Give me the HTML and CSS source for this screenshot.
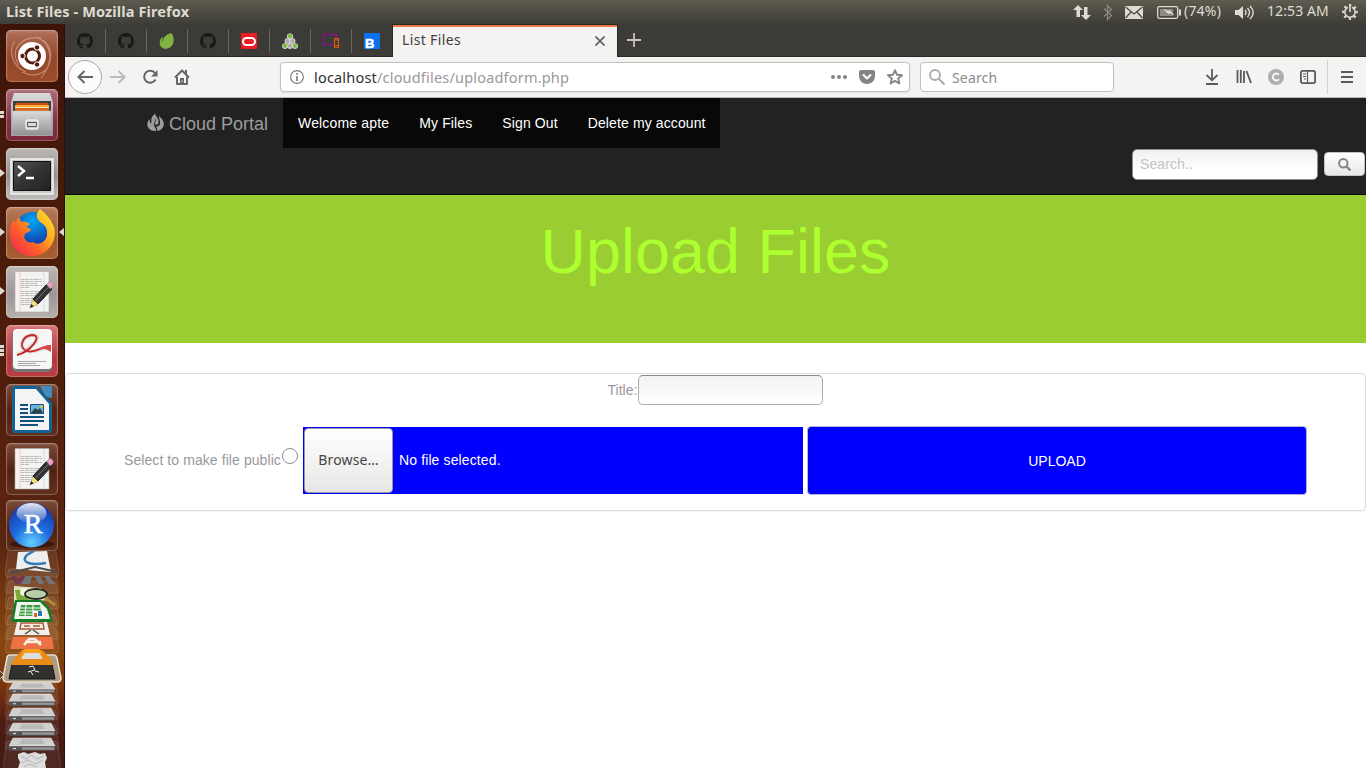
FILE: index.html
```html
<!DOCTYPE html>
<html lang="en">
<head>
<meta charset="utf-8">
<title>List Files</title>
<link rel="stylesheet" href="styles.css">
</head>
<body>
<svg class="defs" width="0" height="0">
  <defs>
    <linearGradient id="silver" x1="0" y1="0" x2="0" y2="1"><stop offset="0" stop-color="#dcdcdc"/><stop offset="1" stop-color="#8f8f8f"/></linearGradient>
    <linearGradient id="fox" x1="1" y1="0" x2="0" y2="1"><stop offset="0" stop-color="#ffe93a"/><stop offset=".35" stop-color="#ffb01c"/><stop offset=".65" stop-color="#ff5a2a"/><stop offset="1" stop-color="#ec2058"/></linearGradient>
    <radialGradient id="globe" cx=".5" cy=".25" r=".7"><stop offset="0" stop-color="#00a7f5"/><stop offset="1" stop-color="#1438a8"/></radialGradient>
    <radialGradient id="rball" cx=".5" cy=".9" r=".8"><stop offset="0" stop-color="#62d2ff"/><stop offset=".5" stop-color="#1f6fe0"/><stop offset="1" stop-color="#153fb0"/></radialGradient>
    <linearGradient id="gloss" x1="0" y1="0" x2="0" y2="1"><stop offset="0" stop-color="#fff" stop-opacity=".9"/><stop offset="1" stop-color="#fff" stop-opacity=".1"/></linearGradient>
    <linearGradient id="screen" x1="0" y1="0" x2="1" y2="1"><stop offset="0" stop-color="#555"/><stop offset=".5" stop-color="#333"/><stop offset="1" stop-color="#222"/></linearGradient>
    <symbol id="github" viewBox="0 0 16 16"><path fill="#191919" d="M8 0C3.58 0 0 3.58 0 8c0 3.54 2.29 6.53 5.47 7.59.4.07.55-.17.55-.38 0-.19-.01-.82-.01-1.49-2.01.37-2.53-.49-2.69-.94-.09-.23-.48-.94-.82-1.13-.28-.15-.68-.52-.01-.53.63-.01 1.08.58 1.23.82.72 1.21 1.87.87 2.33.66.07-.52.28-.87.51-1.07-1.78-.2-3.64-.89-3.64-3.95 0-.87.31-1.59.82-2.15-.08-.2-.36-1.02.08-2.12 0 0 .67-.21 2.2.82.64-.18 1.32-.27 2-.27s1.36.09 2 .27c1.53-1.04 2.2-.82 2.2-.82.44 1.1.16 1.92.08 2.12.51.56.82 1.27.82 2.15 0 3.07-1.87 3.75-3.65 3.95.29.25.54.73.54 1.48 0 1.07-.01 1.93-.01 2.2 0 .21.15.46.55.38A8 8 0 0 0 16 8c0-4.42-3.58-8-8-8z"/></symbol>
    <symbol id="editor" viewBox="0 0 52 52">
      <path fill="#f3f3f1" stroke="#aaa" stroke-width=".6" d="M9 5.500h34v40.500H9z"/>
      <path stroke="#f3b9b9" stroke-width=".7" d="M14 6v40"/><path stroke="#c2cfee" stroke-width=".7" d="M38 6v40"/>
      <path stroke="#b4b4b4" stroke-width=".9" stroke-dasharray="3 .6 5 .7" d="M15 13.500h20M15 15.500h21M15 17.500h16M15 19.500h21M15 21.500h8M15 25.500h20M15 27.500h17M15 29.500h15M15 32.500h12M15 34.500h11M15 36.500h10M15 38.500h10"/>
      <path fill="#333" stroke="#171717" d="M27 33 41 18l5 5-14 15z"/><path stroke="#777" d="m29.500 35 14-15"/>
      <path fill="#e6a6c4" stroke="#b8799b" stroke-width=".7" d="m40.500 18.500 2.500-2.500c2-1 5 1.500 4 4l-2.500 3z"/>
      <path fill="#f1e286" stroke="#a69849" stroke-width=".6" d="m26.500 33.500 5.500 5-7.500 3z"/><path fill="#222" d="m25.500 38 2 2.500-4 1.500z"/>
    </symbol>
    <symbol id="drive" viewBox="0 0 48 13" preserveAspectRatio="none"><path fill="#cfcfcf" stroke="#f5f5f5" stroke-width=".6" d="M5 1h38l4 7H1z"/><path fill="#b9b9b9" d="M14 2h20l3 4H11z"/><path fill="#555" d="M1 8h46v4H1z"/><path fill="#999" d="M14 9h32v2H14z"/><path fill="#ddd" d="M5 9.500h3v1H5z"/></symbol>
    <symbol id="sheet" viewBox="0 0 54 30" preserveAspectRatio="none"><path fill="#fff" fill-opacity=".07" stroke="#fff" stroke-opacity=".2" stroke-width=".7" d="M6 1h42q2 0 3 3l3 22q0 3-3 3H3q-3 0-3-3L3 4q0-3 3-3z"/></symbol>
  </defs>
</svg>

<header class="menubar">
  <span class="window-title">List Files - Mozilla Firefox</span>
  <div class="indicators">
    <svg width="18" height="18" viewBox="0 0 18 18"><path fill="#dfdbd2" d="M5 2 0 7h3.500v7h3.500V7h3zM11 4h3.500v8H18l-5 5-5-5h3z"/></svg>
    <svg class="bluetooth" width="10" height="17" viewBox="0 0 10 17"><path fill="none" stroke="#8b8982" stroke-width="1.200" d="m1 4.500 7.500 7-4 4V1.500l4 4-7.500 7"/></svg>
    <svg class="mail" width="18" height="13" viewBox="0 0 18 13"><path fill="#dfdbd2" d="M0 0h18v13H0z"/><path fill="none" stroke="#4b4943" stroke-width="1.300" d="m.5 1 8.500 7 8.500-7M.5 12 6 6M17.500 12 12 6"/></svg>
    <svg class="battery" width="24" height="13" viewBox="0 0 24 13"><rect x=".7" y=".7" width="20" height="11.600" rx="1.500" fill="none" stroke="#dfdbd2" stroke-width="1.300"/><path fill="#8f8c84" d="M3 3h13v7H3z"/><path fill="#dfdbd2" d="M22 3.500h2v6h-2zM6 3l6 2V3.500l6 6-6-2.500v1.500z"/></svg>
    <span class="charge">(74%)</span>
    <svg class="volume" width="20" height="15" viewBox="0 0 20 15"><path fill="#dfdbd2" d="M0 5h3.500L8 1v13l-4.500-4H0z"/><path fill="none" stroke="#dfdbd2" stroke-width="1.400" d="M10 5q2 2.500 0 5M12.500 3q4 4.500 0 9M15 1q6.500 6.500 0 13"/></svg>
    <span class="clock">12:53 AM</span>
    <svg class="gear" width="16" height="16" viewBox="0 0 16 16"><circle cx="8" cy="8" r="6.800" fill="none" stroke="#dfdbd2" stroke-width="2.200" stroke-dasharray="2.300 3.040" stroke-dashoffset="1.150"/><path fill="none" stroke="#dfdbd2" stroke-width="1.600" d="M6 3.200A5.200 5.200 0 1 0 10 3.200M8 0v8"/></svg>
  </div>
</header>

<div class="desktop">
  <aside class="launcher">
    <div class="tile dash"><svg width="52" height="52" viewBox="0 0 52 52"><g fill="none" stroke="#edc0ad" stroke-width="1.200" opacity=".5"><path d="M13 35C3 20 15 5 36 8M20 42C6 37 2 20 9 11M44 28c0 14-13 21-28 14M37 10c12 10 9 24-2 38M29 7c12 3 18 16 13 29"/></g><circle cx="26" cy="26" r="14" fill="#fff"/><circle cx="26.500" cy="26" r="7" fill="none" stroke="#561b0a" stroke-width="3"/><g fill="#561b0a" stroke="#fff" stroke-width="1"><circle cx="16.500" cy="26" r="2.700"/><circle cx="31" cy="17.500" r="2.700"/><circle cx="31" cy="34.500" r="2.700"/></g></svg></div>
    <div class="tile files"><i class="pips two"></i><svg width="52" height="52" viewBox="0 0 52 52"><path fill="url(#silver)" d="M8 4h36l3 10v33H5V14z"/><path fill="#424242" d="M7 12h38v11H7z"/><path fill="#c74d12" d="M10 14h32v3H10z"/><path fill="#fcae35" d="M9 16h34v2H9z"/><path fill="#f7dfc0" d="M9 18h34v1H9z"/><path fill="#d7661f" d="M9 19h34v3H9z"/><path fill="url(#silver)" stroke="#bbb" stroke-width=".5" d="M6.500 22h38.500v24.500H6.500z"/><rect x="20" y="31" width="12" height="9" rx="2" fill="#ccc" stroke="#eee" stroke-width="1.500"/><path fill="#ddd" stroke="#555" d="M21.500 33.500h9v4h-9z"/></svg></div>
    <div class="tile terminal"><i class="arrow"></i><svg width="52" height="52" viewBox="0 0 52 52"><path fill="#c8c8c8" stroke="#f3f3f3" stroke-width="1.500" d="M5 11h42v35H5z"/><path fill="url(#screen)" stroke="#111" d="M7.500 13.500h37v29h-37z"/><path fill="none" stroke="#fff" stroke-width="2.400" d="m12 18 6 5-6 5M20 30h8"/></svg></div>
    <div class="tile firefox"><i class="arrow"></i><i class="arrow focused"></i><svg width="52" height="52" viewBox="0 0 52 52"><circle cx="27" cy="23" r="18" fill="url(#globe)"/><path fill="url(#fox)" d="M34 2c6 5 11 10 14 18 4 16-8 29-22 29C13 49 3 39 4 25c0-6 1-9 4-13l1 4 4-6 2 5c4-1 6 0 9 2l-4 3 5 2c0 3-4 3-6 5-3 6 4 10 8 8 4 4 13 1 14-7 1-8-3-10-8-14-3-4-3-8 1-12z"/></svg></div>
    <div class="tile gedit"><i class="arrow"></i><svg width="52" height="52"><use href="#editor"/></svg></div>
    <div class="tile pdf"><i class="pips three"></i><svg width="52" height="52" viewBox="0 0 52 52"><rect x="6" y="5" width="40" height="42" rx="5" fill="#777"/><rect x="7" y="4" width="39" height="40" rx="4" fill="#f6f6f6"/><path fill="none" stroke="#ddd" stroke-width="4" d="M11 29C24 26 39 9 27 10 16 11 12 23 20 26c9 3 17-5 25-4"/><path fill="none" stroke="#c82626" stroke-width="1.800" d="M11 30C24 27 38 10 26 10c-10 1-14 13-5 16 8 3 15-5 24-5"/><path fill="#d8494a" d="M32 24c5-3 9-4 13-4v7c-5-4-9-3-13-3z"/><path stroke="#aaa" d="M12 36.500h28M12 38.500h18M12 40.500h22"/></svg></div>
    <div class="tile"><svg width="52" height="52" viewBox="0 0 52 52"><path fill="#126497" d="M8 2h23l15 17v27q0 3-3 3H9q-3 0-3-3V5q0-3 2-3z"/><path fill="#f4f4f4" d="M9 5h21l13 15v26H9z"/><path fill="#3e8eb9" d="M34 2h12v12q-5 0-7-3z"/><path stroke="#12517d" stroke-width="2" d="M14 21h8M14 25h8M14 29h8M14 33h24M14 37h24M14 41h18"/><path fill="#69b3e2" stroke="#12517d" d="M24.500 20.500h13v9h-13z"/><path fill="#2d4544" d="m25 29 4-5 3 2 2-2 3 5z"/><circle cx="35.500" cy="22.500" r="1.500" fill="#e4c82a"/></svg></div>
    <div class="tile"><svg width="52" height="52"><use href="#editor"/></svg></div>
    <div class="tile rstudio"><svg width="52" height="51" viewBox="0 0 52 51"><ellipse cx="26" cy="44" rx="22" ry="4" fill="#240b05" opacity=".6"/><circle cx="25.500" cy="25" r="22.500" fill="url(#rball)"/><ellipse cx="25.500" cy="13" rx="15" ry="10" fill="url(#gloss)"/><text x="27" y="33" text-anchor="middle" class="r-letter">R</text></svg></div>
    <svg class="folded" width="65" height="217" viewBox="0 3 65 217">
      <use href="#sheet" x="5" y="0" width="54" height="30"/><use href="#sheet" x="5" y="20" width="54" height="26"/><use href="#sheet" x="5" y="32" width="54" height="30"/><use href="#sheet" x="5" y="48" width="54" height="30"/><use href="#sheet" x="5" y="66" width="54" height="26"/><use href="#sheet" x="5" y="78" width="54" height="28"/>
      <path fill="#eee" d="m18 4 29-1 4 21-35-3z"/><path fill="none" stroke="#2f7eb9" stroke-width="2.500" d="M46 15C30 18 20 14 27 7l7-4"/><path fill="none" stroke="#4b4b4b" stroke-width="2" d="m10 25 25-6 22 5"/>
      <path fill="#73354f" d="m11 28 5 8h4l5-8h-4l-2 4-3-4z"/><path fill="#70757a" d="m26 28-5 8h9l2-8zm8 0 5 8h5l-4-8zm10 0 5 8h6l-6-8z"/>
      <path fill="#dce3bc" d="m14 38 27 2 8 12-35 3z"/><path fill="#7da83a" d="m15 42 26-1 4 9-28 3z"/><circle cx="24" cy="44" r="4" fill="#eff2dc"/><ellipse cx="36" cy="46" rx="11" ry="5" fill="#c3d7be" fill-opacity=".8" stroke="#242424" stroke-width="1.800"/><path stroke="#b18c35" stroke-width="3" d="m45 50 10 7"/>
      <path fill="#147c27" d="M15 52h26l8 7 4 15H11z"/><path fill="#f2f3ee" d="M17 54h23l7 7 3 10H14z"/><path fill="#3c9c41" d="M21 57h19l2 11H19z"/><path stroke="#fff" d="M20 60h21M20 63h21M20 66h22M26 57l-1 11M33 57v11"/><path fill="#fff" d="M33 63h10l1 6H33z"/><path fill="#cb672a" d="M34 65h3v4h-3z"/><path fill="#3478aa" d="M38 63h4v5h-4z"/>
      <path fill="#f2eee9" d="M17 74h30l3 13H14z"/><path fill="none" stroke="#aa5b3a" stroke-width="1.500" d="M21 75h22l1 6H20zM24 78h6M33 78h7"/><path stroke="#4f4a47" stroke-width="1.500" d="m31 82-6 4m8-4 6 4"/>
      <path fill="#ed7144" d="M13 89h39l2 12H10z"/><path fill="none" stroke="#f6eee3" stroke-width="2.500" d="m24 97 5-6h6l6 6M25 94h16"/>
      <path fill="#b8b3a4" fill-opacity=".8" stroke="#e5e1d6" stroke-width="1.500" d="M10 107h44q2 0 3 3l4 20q0 4-4 4H8q-5 0-5-4l4-20q0-3 3-3z"/><path fill="#30302f" stroke="#151515" d="M12 116h40l3 15H9z"/><path fill="#e88b18" d="m15 110 7-8h20l8 8 4 7H11z"/><path fill="#f4a01d" d="M24 101h16l3 9H20z"/><path fill="#ddd" d="M25 105h14l4 6H21z"/><path fill="none" stroke="#eee" d="m29 119 4-1 2 4-7 2m7-1 4 1m-8 0 2 3"/>
      <g opacity=".9"><use href="#sheet" x="5" y="132" width="54" height="25"/><use href="#sheet" x="5" y="146" width="54" height="26"/><use href="#sheet" x="5" y="161" width="54" height="26"/><use href="#sheet" x="5" y="176" width="54" height="26"/><use href="#sheet" x="3" y="192" width="58" height="30"/></g>
      <use href="#drive" x="8" y="134" width="48" height="12"/><use href="#drive" x="8" y="145" width="48" height="14"/><use href="#drive" x="8" y="159" width="48" height="15"/><use href="#drive" x="8" y="174" width="48" height="15"/><use href="#drive" x="8" y="189" width="48" height="15"/>
      <path fill="#ddd" d="m18 206 6-2 4 2 7-2 5 2 5-1 2 5-2 4 1 6H18l2-6-2-4z"/><path fill="none" stroke="#b5b5b5" d="m21 208 5 3 5-4 6 4 7-3M21 215l7-3 7 4 8-4M24 219l5-3 8 3"/>
      <path fill="none" stroke="#a9d4e6" d="m0 123 4 4-4 4"/>
    </svg>
  </aside>

  <main class="browser">
    <nav class="tabs">
      <span class="pinned"><svg width="16" height="16"><use href="#github"/></svg></span>
      <span class="pinned"><svg width="16" height="16"><use href="#github"/></svg></span>
      <span class="pinned"><svg width="16" height="16" viewBox="0 0 16 16"><path fill="#80b341" d="M12.500.3c2 2 3.500 8.500.4 12.500-3 4-9.300 4-11.400.2C-.1 10 .8 6.500 3 4.200c.6-.4 1 .1.8.7C3 7 3 9 3.500 9.500 3.400 5 8 .5 12.500.3z"/></svg></span>
      <span class="pinned"><svg width="16" height="16"><use href="#github"/></svg></span>
      <span class="pinned"><svg width="16" height="16" viewBox="0 0 16 16"><path fill="#ec1c24" d="M0 0h16v16H0z"/><rect x="2" y="5" width="12" height="7" rx="3.500" fill="none" stroke="#fff" stroke-width="2"/></svg></span>
      <span class="pinned"><svg width="16" height="16" viewBox="0 0 16 16"><g fill="#aaa" stroke="#eee" stroke-width=".7"><circle cx="8" cy="3.500" r="2.800"/><circle cx="5.500" cy="8" r="2.600"/><circle cx="10.500" cy="8" r="2.600"/><circle cx="3" cy="13" r="2.600"/><circle cx="8" cy="13" r="2.600"/><circle cx="13" cy="13" r="2.600"/></g><g fill="#76bd25"><circle cx="8" cy="3" r="1.900"/><circle cx="3" cy="12.500" r="1.900"/><circle cx="13" cy="12.500" r="1.900"/></g></svg></span>
      <span class="pinned"><svg width="16" height="16" viewBox="0 0 16 16"><path fill="none" stroke="#86128c" stroke-width="1.300" d="M10 11.500H.5v-10h13V5"/><path fill="none" stroke="#df5a12" stroke-width="1.100" d="M11.500 5.500h4v9h-4zM11.500 12.500h4M11.500 7h4"/></svg></span>
      <span class="pinned"><svg width="16" height="16" viewBox="0 0 16 16"><path fill="#0d70ed" d="M0 0h16v16H0z"/><text x="1" y="14.500" class="b-letter">B</text></svg></span>
      <div class="tab-active"><span>List Files</span><svg width="10" height="10" viewBox="0 0 10 10"><path fill="none" stroke="#666" stroke-width="1.800" d="m.5.5 9 9m0-9-9 9"/></svg></div>
      <svg class="new-tab" width="14" height="14" viewBox="0 0 14 14"><path stroke="#c6c4bd" stroke-width="1.800" d="M7 0v14M0 7h14"/></svg>
    </nav>
    <div class="toolbar">
      <span class="back"><svg width="16" height="14" viewBox="0 0 16 14"><path fill="none" stroke="#666" stroke-width="2" d="M7.500 1 1.500 7l6 6M1.500 7H16"/></svg></span>
      <svg class="forward" width="16" height="14" viewBox="0 0 16 14"><path fill="none" stroke="#bcbbb9" stroke-width="2" d="m8.500 1 6 6-6 6M14.500 7H0"/></svg>
      <svg class="reload" width="16" height="16" viewBox="0 0 16 16"><path fill="none" stroke="#666" stroke-width="2" d="M13 4.200A6 6 0 1 0 13.500 10.500"/><path fill="#666" d="M15.500 1v6.500H9z"/></svg>
      <svg class="home" width="16" height="16" viewBox="0 0 16 16"><path fill="none" stroke="#666" stroke-width="2" stroke-linejoin="round" d="m1 8.500 7-7 7 7M3 8v7h10V8"/><path fill="#666" d="M6 9h4v6H6zM11 1h2v5l-2-2z"/><path fill="#f4f3f2" d="M7.500 11.500h1V13h-1z"/></svg>
      <div class="address">
        <svg width="14" height="14" viewBox="0 0 14 14"><circle cx="7" cy="7" r="6.400" fill="none" stroke="#777" stroke-width="1.100"/><path stroke="#777" stroke-width="1.600" d="M7 6v5M7 3v1.700"/></svg>
        <span class="url"><b>localhost</b>/cloudfiles/uploadform.php</span>
        <svg class="dots" width="16" height="4" viewBox="0 0 16 4"><g fill="#858585"><circle cx="2" cy="2" r="2"/><circle cx="8" cy="2" r="2"/><circle cx="14" cy="2" r="2"/></g></svg>
        <svg class="pocket" width="16" height="14" viewBox="0 0 16 14"><path fill="#858585" d="M2 0h12q2 0 2 2v4c0 5-4 8-8 8S0 11 0 6V2q0-2 2-2z"/><path fill="none" stroke="#fff" stroke-width="2" stroke-linecap="round" stroke-linejoin="round" d="m4.500 5 3.500 3.500L11.500 5"/></svg>
        <svg class="star" width="16" height="16" viewBox="0 0 16 16"><path fill="none" stroke="#858585" stroke-width="1.900" stroke-linejoin="round" d="m8 1.200 2 4.600 5 .4-3.800 3.300 1.200 5L8 11.900l-4.400 2.600 1.200-5L1 6.200l5-.4z"/></svg>
      </div>
      <div class="websearch"><svg width="16" height="16" viewBox="0 0 16 16"><circle cx="6" cy="6" r="5" fill="none" stroke="#aaa" stroke-width="1.800"/><path stroke="#aaa" stroke-width="2" d="m10 10 5.500 5.500"/></svg><span>Search</span></div>
      <div class="tools">
        <svg width="16" height="16" viewBox="0 0 16 16"><path fill="none" stroke="#5a5a5a" stroke-width="1.800" d="M8 0v11M2.500 6 8 11.300 13.500 6M2 15h12"/></svg>
        <svg width="16" height="16" viewBox="0 0 16 16"><path stroke="#5a5a5a" stroke-width="1.800" d="M1.500 1v13M4.800 1v13M8 2v12M10.500 2 15 14"/></svg>
        <svg width="16" height="16" viewBox="0 0 16 16"><circle cx="8" cy="8" r="8" fill="#acaeb2"/><path fill="none" stroke="#f5f5f5" stroke-width="2" d="M11 5.700a3.500 3.500 0 1 0 0 4.600"/></svg>
        <svg width="16" height="16" viewBox="0 0 16 16"><rect x=".9" y="1.900" width="14.200" height="12.200" rx="1.800" fill="none" stroke="#5a5a5a" stroke-width="1.800"/><path stroke="#5a5a5a" stroke-width="1.200" d="M7.500 2v12M3 5h3M3 7.500h3M4 10h2"/></svg>
      </div>
      <span class="menu"><svg width="12" height="12" viewBox="0 0 12 12"><path stroke="#5a5a5a" stroke-width="1.800" d="M0 1h12M0 6h12M0 11h12"/></svg></span>
    </div>

    <section class="page">
      <div class="navbar">
        <div class="nav-row">
          <a class="brand"><svg width="17" height="18" viewBox="0 0 17 18"><path fill="#9d9d9d" d="M8.200 0C7.800 3 12.300 5 11.500 9.500 11 12.500 7.800 12.500 8 10 8.100 8.500 9.500 8 9 5.500 8.300 8 6.700 9.500 7 12c.2 2.500 2.500 3 2 6C4 18.300.5 15.500.3 11.500.2 9 1.500 8 2.200 6c1 1.500.2 4 1.700 4.500C5 9 3.800 7 4.800 4.500 5.500 2.500 7.500 2 8.200 0z"/><path fill="#9d9d9d" d="M12.300 2.500c.4 2 4.500 4 4.500 8.500 0 4-3 6.500-6.500 6.900.3-1.600-1.200-2.900-.9-4.600 1.800.5 3.400-.8 3.700-2.800.4-2.500-1.600-5-.8-8z"/></svg><span>Cloud Portal</span></a>
          <div class="links"><a>Welcome apte</a><a>My Files</a><a>Sign Out</a><a>Delete my account</a></div>
        </div>
        <div class="site-search"><div class="search-field">Search..</div><div class="search-button"><svg width="13" height="13" viewBox="0 0 13 13"><circle cx="5.300" cy="5.300" r="4.200" fill="none" stroke="#858585" stroke-width="2"/><path stroke="#858585" stroke-width="2.400" d="m8.500 8.500 4 4"/></svg></div></div>
      </div>
      <div class="banner"><h1>Upload Files</h1></div>
      <form class="card">
        <div class="title-row"><label>Title:</label><div class="title-field"></div></div>
        <div class="upload-row">
          <label class="public">Select to make file public</label><span class="radio"></span>
          <div class="file"><div class="browse">Browse…</div><span>No file selected.</span></div>
          <div class="upload">UPLOAD</div>
        </div>
      </form>
    </section>
  </main>
</div>
</body>
</html>
```
FILE: styles.css
```css
* { box-sizing: border-box; }
body { margin: 0; width: 1366px; height: 768px; overflow: hidden; background: #fff; font-family: "Liberation Sans", Arial, sans-serif; font-size: 14px; }
svg { display: block; flex: none; }
.defs { position: absolute; }

.menubar { height: 24px; display: flex; justify-content: space-between; align-items: center; padding: 0 8px 0 6px; background: linear-gradient(#5e5c50, #57554a 20%, #3e3d38); color: #dfdbd2; font-family: "Noto Sans", sans-serif; }
.window-title { font-weight: 700; font-size: 14.500px; line-height: 20px; padding-bottom: 2px; white-space: nowrap; letter-spacing: .13px; }
.indicators { display: flex; align-items: center; white-space: nowrap; }
.bluetooth { margin-left: 12px; }
.mail { margin-left: 12px; }
.battery { margin-left: 14px; }
.charge, .clock { line-height: 20px; padding-bottom: 2px; }
.charge { width: 38px; margin-left: 3px; font-size: 14px; letter-spacing: .2px; }
.volume { margin-left: 13px; }
.clock { width: 63px; margin-left: 12px; font-size: 14px; letter-spacing: .1px; }
.gear { margin-left: 12px; }

.desktop { height: 744px; display: flex; }
.launcher { width: 65px; height: 744px; padding: 6px 0 0 6px; overflow: hidden; display: flex; flex-direction: column; gap: 7px; border-right: 1px solid #2b0e07; background: linear-gradient(#3b1308, #451809 12%, #501d0b 45%, #5b2610 70%, #87470f 83%, #7b350d 89%, #4a1b12 94%, #421a14); }
.tile { position: relative; flex: none; width: 52px; height: 52px; border-radius: 5px; background: linear-gradient(#7b4b39, #522011 55%, #60301d); box-shadow: inset 0 0 0 1px rgba(255,255,255,.2), inset 0 1px 3px rgba(255,255,255,.25); }
.dash { background: linear-gradient(#b0705a, #94492c 50%, #9c4c29); }
.files { background: linear-gradient(#ae707a, #843043 60%, #7d2637); }
.terminal { background: linear-gradient(#bcb9b5, #91908e 55%, #c1bfbb); }
.firefox { background: linear-gradient(#b47b5b, #9c5630 60%, #a85f35); }
.gedit { background: linear-gradient(#c0bab7, #9b9693 55%, #b9b2af); }
.pdf { background: linear-gradient(#d57478, #b33b3f 60%, #b83d40); }
.rstudio { height: 51px; margin-top: -2px; }
.r-letter { font: 28px "Liberation Serif", serif; fill: #fff; stroke: #fff; stroke-width: .6px; }
.b-letter { font: 900 13px "Liberation Sans", sans-serif; fill: #fff; stroke: #fff; stroke-width: .5px; }
.arrow { position: absolute; left: -6px; top: 21px; border: solid transparent; border-width: 4px 0 4px 5px; border-left-color: #ddd8d4; }
.arrow.focused { left: 53px; border-width: 4px 5px 4px 0; border-right-color: #ddd8d4; }
.pips { position: absolute; left: -6px; width: 4px; background: repeating-linear-gradient(#ddd8d4 0 3px, transparent 3px 4px); }
.two { top: 22px; height: 7px; }
.three { top: 20px; height: 11px; }
.folded { margin: -7px 0 0 -6px; }

.browser { flex: 1; min-width: 0; display: flex; flex-direction: column; }
.tabs { height: 33px; display: flex; background: #3c3b37; border-bottom: 1px solid #2a2926; font-family: "Noto Sans", sans-serif; color: #3f3f3f; }
.pinned { width: 41px; height: 33px; display: flex; align-items: center; padding: 1px 0 0 12px; background: linear-gradient(#67665f, #67665f) 40px 5px / 1px 24px no-repeat; }
.pinned:nth-child(8) { background: none; }
.tab-active { width: 224px; height: 32px; margin-top: 1px; display: flex; align-items: center; justify-content: space-between; padding: 0 12px 2px 9px; background: #f4f3f2; border-top: 2px solid #ef7847; box-shadow: 0 0 0 1px #2a2926; clip-path: inset(-1px -1px 0 -1px); }
.tab-active span { letter-spacing: .35px; line-height: 20px; padding-bottom: 2px; }
.new-tab { margin: 9px 0 0 10px; }
.toolbar { height: 41px; display: flex; align-items: center; padding-left: 3px; background: #f4f3f2; border-bottom: 1px solid #b5b4b2; font-family: "Noto Sans", sans-serif; font-size: 14px; }
.back { width: 34px; height: 34px; display: flex; align-items: center; justify-content: center; border: 1px solid #aaa; border-radius: 50%; background: #fcfcfc; }
.forward { margin-left: 8px; }
.reload { margin-left: 16px; }
.home { margin-left: 16px; }
.address { width: 630px; height: 30px; margin-left: 90px; padding: 0 6px 0 9px; display: flex; align-items: center; background: #fff; border: 1px solid #c2c0bd; border-radius: 4px; box-shadow: 0 1px 2px #ddd; }
.url { margin-left: 10px; color: #999; font-size: 14.500px; letter-spacing: .19px; white-space: nowrap; }
.url b { font-weight: 400; color: #303030; }
.dots { margin-left: auto; }
.pocket { margin-left: 12px; }
.star { margin-left: 12px; }
.websearch { width: 194px; height: 30px; margin-left: 10px; padding-left: 8px; display: flex; align-items: center; gap: 7px; background: #fff; border: 1px solid #c2c0bd; border-radius: 4px; color: #8b8b8b; letter-spacing: .15px; }
.tools { display: flex; gap: 16px; margin-left: 90px; }
.menu { height: 34px; margin-left: 11px; padding-left: 13px; border-left: 1px solid #d3d1cf; display: flex; align-items: center; }

.page { flex: 1; background: #fff; color: #999; }
.navbar { height: 97px; background: #222; border-bottom: 1px solid #080808; }
.nav-row { height: 50px; display: flex; }
.brand { width: 218px; padding: 0 0 0 82px; display: flex; align-items: center; color: #9d9d9d; font-size: 18px; white-space: nowrap; }
.brand svg { margin: -3px 5px 0 0; }
.brand span { padding-top: 2px; }
.links { width: 437px; display: flex; background: #080808; }
.links a { padding: 0 15px; line-height: 50px; color: #fff; white-space: nowrap; letter-spacing: .115px; }
.links a:first-child { letter-spacing: .17px; }
.site-search { display: flex; align-items: center; justify-content: flex-end; gap: 6px; padding: 1px 1px 0 0; }
.search-field { width: 186px; height: 31px; padding: 0 7px; line-height: 29px; border: 1px solid #8e8e8e; border-radius: 5px; background: linear-gradient(#f0f0f0, #fff 70%); color: #c3c3c3; letter-spacing: .1px; }
.search-button { width: 41px; height: 24px; margin-top: -1px; display: flex; align-items: center; justify-content: center; border: 1px solid #c5c2bf; border-radius: 4px; background: linear-gradient(#fff, #e9e8e6); }
.banner { height: 148px; padding-top: 22px; background: #9acd32; }
h1 { margin: 0; font-size: 63px; line-height: 69px; font-weight: 400; text-align: center; color: #adff2f; }
.card { height: 138px; margin-top: 30px; border: 1px solid #ddd; border-radius: 4px; box-shadow: 0 1px 1px rgba(0,0,0,.05); }
.title-row { height: 31px; margin-top: 1px; display: flex; justify-content: center; line-height: 30px; }
.title-field { width: 185px; height: 30px; margin-left: 1px; border: 1px solid #acacac; border-top-color: #898989; border-radius: 5px; background: linear-gradient(#f2f2f2, #fff); }
.upload-row { display: flex; align-items: center; height: 69px; margin: 20px 0 0 58px; }
.public { width: 157px; padding-bottom: 2px; white-space: nowrap; letter-spacing: .08px; }
.radio { width: 16px; height: 16px; margin: -9px 0 0 1px; border: 1px solid #8e8e8e; border-radius: 50%; background: #fff; }
.file { width: 500px; height: 67px; margin-left: 5px; padding-left: 1px; display: flex; align-items: center; background: #00f; color: #fff; }
.file span { padding-bottom: 2px; letter-spacing: .12px; }
.browse { width: 89px; height: 65px; line-height: 62px; margin-right: 6px; text-align: center; color: #444; font-family: "Noto Sans", sans-serif; letter-spacing: .15px; border: 1px solid #999; border-radius: 4px; background: linear-gradient(#fff, #f2f1f0 60%, #e8e6e4); }
.upload { width: 500px; height: 69px; margin-left: 4px; line-height: 68px; text-align: center; color: #fff; background: #00f; border: 1px solid #b4b4d8; border-radius: 4px; }
```
